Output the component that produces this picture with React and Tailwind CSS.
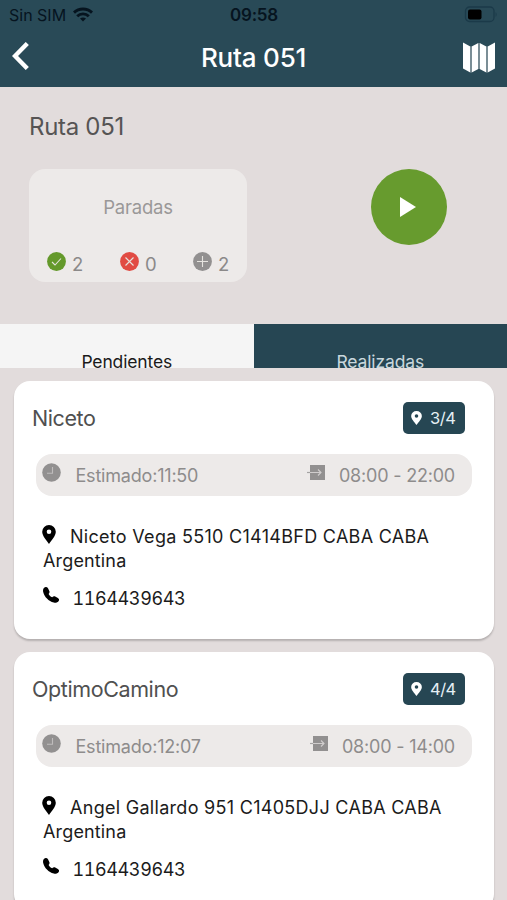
function Wifi() {
  return (
    <svg className="h-[15px] w-5" viewBox="0 0 20 15" fill="none" stroke="#06141f" strokeWidth="2.9">
      <path d="M1 5.600C6 .8 14 .8 19 5.600" />
      <path d="M4.200 9.200C7.400 6.100 12.600 6.100 15.800 9.200" />
      <path d="M10 14.500 7 11.600Q10 9.200 13 11.600Z" fill="#06141f" stroke="none" />
    </svg>
  );
}

function Battery() {
  return (
    <svg className="h-[17px] w-[34px]" viewBox="0 0 34 17">
      <rect x="1.500" y="1" width="28.500" height="14.500" rx="4" fill="none" stroke="#1b3a49" strokeWidth="1.300" />
      <rect x="4" y="3.500" width="13.500" height="10" rx="2" fill="#000" />
      <path d="M31.600 6v5q2-2.500 0-5" fill="#1b3a49" />
    </svg>
  );
}

function MapIcon() {
  return (
    <svg className="h-[31px] w-8" viewBox="0 0 32 31">
      <path d="M0 0.500 7.300 4.500v26L0 26.500Z" fill="#fff" />
      <path d="M8.700 4.500 15.300 1v26L8.700 30.500Z" fill="#fff" />
      <path d="M16.700 1 23.300 4.500v26L16.700 27Z" fill="#fff" />
      <path d="M24.700 4.500 32 .5v26l-7.300 4Z" fill="#fff" />
      <path d="M7.300 4.500h1.400v26H7.300ZM15.300 1h1.400v26h-1.400ZM23.300 4.500h1.400v26h-1.400Z" fill="#83949c" />
    </svg>
  );
}

function Pin({ className }) {
  return (
    <svg className={className} viewBox="0 0 14 19" fill="currentColor" preserveAspectRatio="none">
      <path fillRule="evenodd" d="M7 0a6.800 6.800 0 0 0-6.800 6.800C.2 11 4.400 15 7 19c2.600-4 6.800-8 6.800-12.200A6.800 6.800 0 0 0 7 0Zm0 4.500a2.300 2.300 0 1 1 0 4.600 2.300 2.300 0 0 1 0-4.600Z" />
    </svg>
  );
}

function Phone() {
  return (
    <svg className="h-4 w-4" viewBox="0 0 16 16">
      <path d="M.9.900C2.300-.3 4.100-.2 5 1.300L6.300 3.900C6.900 5.200 6.400 6.100 5.600 6.900c.7 1.400 2 2.600 3.600 3.300.9-.8 1.800-1.300 3-.7l2.700 1.400c1.300.8 1.500 2.200.6 3.300-1.100 1.300-2.900 1.900-4.700 1.300C5.700 14.100 1.300 9.800.2 4.900-.2 3.200.1 1.800.9.900Z" fill="#000" />
    </svg>
  );
}

function Clock() {
  return (
    <svg className="h-[19px] w-[19px]" viewBox="0 0 19 19" fill="none">
      <circle cx="9.500" cy="9.500" r="9.300" fill="#929090" />
      <path d="M10.500 4v6.200H5" stroke="#bfbcbc" strokeWidth="1.100" />
    </svg>
  );
}

function Enter() {
  return (
    <svg className="h-[15px] w-[18px]" viewBox="0 0 18 15" fill="none">
      <path d="M3 0h15v15H3Z" fill="#929090" />
      <path d="M0 7.500h3" stroke="#a5a3a3" strokeWidth="1.200" />
      <path d="M3 7.500h11M11 4.500l3 3-3 3" stroke="#d0cdcd" strokeWidth="1.100" />
    </svg>
  );
}

function Count({ color, mark, value }) {
  return (
    <div className="flex w-[73px] shrink-0 items-start">
      <svg className="h-[19px] w-[19px]" viewBox="0 0 19 19" fill="none">
        <circle cx="9.500" cy="9.500" r="9.400" fill={color} />
        <path d={mark} stroke="#e6e4df" strokeWidth="1.100" />
      </svg>
      <span className="ml-[6px] text-[18.500px] leading-6 text-[#8b8989]">{value}</span>
    </div>
  );
}

function Stop({ name, position, eta, hours, address }) {
  return (
    <article className="h-[258px] shrink-0 rounded-2xl bg-white pt-5 shadow-[0_2px_2px_rgba(0,0,0,0.2)]">
      <div className="flex h-[34px] items-center justify-between pl-[18px] pr-[29px]">
        <h2 className="pt-px text-[21.500px] tracking-[-0.4px] text-[#505050]">{name}</h2>
        <div className="flex h-8 w-[62px] items-center rounded-[5px] bg-[#264653] pl-2 text-white">
          <Pin className="h-[14px] w-[11px]" />
          <span className="ml-[8px] text-[16.500px] tracking-[-0.5px] text-[#e5f0f5]">{position}</span>
        </div>
      </div>
      <div className="ml-[22px] mr-[22px] mt-[19px] flex h-[42px] items-center rounded-2xl bg-[#edeae9] pl-[6px] pr-[17px] text-[18px] text-[#8e8c8c]">
        <div className="-mt-[5px]"><Clock /></div>
        <span className="ml-[14.500px] tracking-[-0.2px]">{eta}</span>
        <div className="-mt-[5px] ml-auto"><Enter /></div>
        <span className="ml-[14px] tracking-[-0.2px]">{hours}</span>
      </div>
      <div className="ml-[29px] mt-[29px] text-[18px] leading-6 text-[#1b1b1b]">
        <div className="flex">
          <Pin className="-ml-px h-[19px] w-[14px] text-black" />
          <span className="ml-[14px] whitespace-nowrap tracking-[0.290px]">{address}</span>
        </div>
        <div className="tracking-[0.15px]">Argentina</div>
        <div className="mt-[14px] flex">
          <Phone />
          <span className="ml-[13.500px] tabular-nums tracking-[-0.4px]">1164439643</span>
        </div>
      </div>
    </article>
  );
}

export default function App() {
  return (
    <div className="flex h-[900px] w-[507px] flex-col overflow-hidden bg-[#e2dcdc] font-['Inter','Liberation_Sans',sans-serif]">
      <header className="h-[87px] shrink-0 bg-[#294a57]">
        <div className="grid h-[28px] grid-cols-3 items-center px-[9px] text-[#06141f]">
          <div className="flex items-center gap-[7px] pt-px text-[16px]">
            <span>Sin SIM</span>
            <Wifi />
          </div>
          <div className="pl-px pt-[3px] text-center text-[17px] font-semibold tracking-[-0.2px]">09:58</div>
          <div className="flex justify-end"><Battery /></div>
        </div>
        <div className="grid h-[59px] grid-cols-[1fr_auto_1fr] items-center pl-3 pr-3 text-white">
          <svg className="-mt-1 h-7 w-[17px]" viewBox="0 0 17 28" fill="none" stroke="#fff" strokeWidth="4.400">
            <path d="M15.300 1.500 3 14 15.300 26.500" />
          </svg>
          <h1 className="text-[26px] font-medium tracking-[-0.2px]">Ruta 051</h1>
          <div className="flex justify-end"><MapIcon /></div>
        </div>
      </header>

      <section className="h-[237px] shrink-0 pl-[29px] pt-[25px]">
        <p className="text-[24px] leading-[30px] tracking-[-0.3px] text-[#565454]">Ruta 051</p>
        <div className="mt-[27px] flex items-start">
          <div className="h-[113px] w-[218px] rounded-2xl bg-[#edeae9] pt-[26px]">
            <p className="text-center text-[18.500px] leading-6 tracking-[-0.2px] text-[#9a9898]">Paradas</p>
            <div className="mt-[33px] flex pl-[18px]">
              <Count color="#64992b" mark="m5 10 3 3 6-6.500" value="2" />
              <Count color="#e14b43" mark="m5.500 5.500 8 8m0-8-8 8" value="0" />
              <Count color="#929090" mark="M9.500 4v11M4 9.500h11" value="2" />
            </div>
          </div>
          <button className="ml-[124px] flex h-[76px] w-[76px] items-center justify-center rounded-full bg-[#679b2e]">
            <svg className="-ml-[3px] h-5 w-4" viewBox="0 0 16 20"><path d="M0 0 16 10 0 20Z" fill="#fff" /></svg>
          </button>
        </div>
      </section>

      <nav className="grid h-[44px] shrink-0 grid-cols-2 overflow-hidden text-center text-[17.500px] tracking-[-0.15px]">
        <div className="bg-[#f5f5f5] pt-[26px] leading-6 text-[#1b1b1b]">Pendientes</div>
        <div className="bg-[#264653] pt-[26px] leading-6 text-[#c9d8de]">Realizadas</div>
      </nav>

      <main className="flex flex-col gap-[13px] pl-[14px] pr-[13px] pt-[13px]">
        <Stop name="Niceto" position="3/4" eta="Estimado:11:50" hours="08:00 - 22:00" address="Niceto Vega 5510 C1414BFD CABA CABA" />
        <Stop name="OptimoCamino" position="4/4" eta="Estimado:12:07" hours="08:00 - 14:00" address="Angel Gallardo 951 C1405DJJ CABA CABA" />
      </main>
    </div>
  );
}
